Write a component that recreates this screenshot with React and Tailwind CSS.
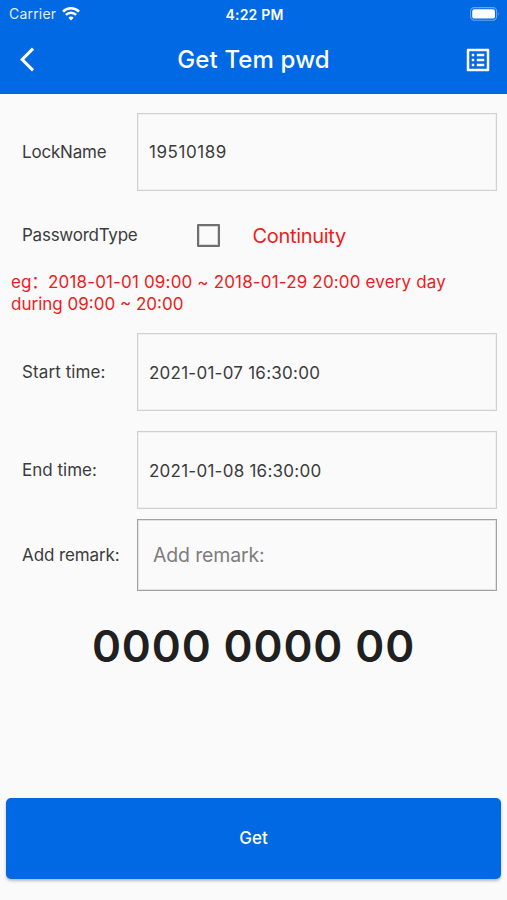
import { useState } from 'react';
import { MdArrowBackIos, MdListAlt } from 'react-icons/md';

const FIELD = 'ml-auto w-[360px] h-[78px] border border-[#d0d0d0] shadow-[inset_0_0_0_1px_#f0f0f0] flex items-center px-[11px]';

const StatusBar = () => (
  <div className="h-[27px] pl-[9px] pr-[7px] flex items-center text-[#e3efff]">
    <div className="flex-1 flex items-center gap-[6px]">
      <span className="text-[14px] tracking-[0.2px]">Carrier</span>
      <svg width="18" height="14" viewBox="0 0 18 14" fill="none" stroke="white" strokeWidth="2.6">
        <path d="M1 4.6 A11.4 11.4 0 0 1 17 4.6" />
        <path d="M3.9 7.9 A7.2 7.2 0 0 1 14.1 7.9" />
        <path d="M9 13.4 L6.4 10.7 A4 4 0 0 1 11.6 10.7 Z" fill="white" stroke="none" />
      </svg>
    </div>
    <span className="pt-px text-[14px] font-semibold tracking-[0.2px] text-white">4:22 PM</span>
    <div className="flex-1 flex justify-end">
      <svg width="30" height="14" viewBox="0 0 30 14">
        <rect x="0.6" y="0.6" width="26" height="12.6" rx="3.6" fill="none" stroke="#6ca6f0" strokeWidth="1.1" />
        <rect x="2.2" y="2.2" width="22.8" height="9.4" rx="2.2" fill="white" />
        <path d="M28 5 Q29.6 6.9 28 8.8 Z" fill="#6ca6f0" />
      </svg>
    </div>
  </div>
);

const Row = ({ label, className, children }) => (
  <div className={`flex items-center pl-[22px] pr-[10px] ${className}`}>
    <span className="pt-[2px] text-[17px] whitespace-nowrap">{label}</span>
    {children}
  </div>
);

const App = () => {
  const [continuity, setContinuity] = useState(false);
  const [remark, setRemark] = useState('');

  return (
    <div className="w-full h-[900px] bg-[#fafafa] text-[#3c3c3c] font-['Inter','Noto_Sans_CJK_SC',sans-serif] flex flex-col overflow-hidden">
      {/* Header */}
      <header className="h-[94px] shrink-0 bg-[#0069e3] text-white">
        <StatusBar />
        <div className="h-[65px] pl-[20px] pr-[14px] flex items-center justify-between">
          <MdArrowBackIos size={29} />
          <h1 className="pt-px text-[24px] font-medium tracking-[0.15px] mr-[5px]">Get Tem pwd</h1>
          <MdListAlt size={30} />
        </div>
      </header>

      {/* Form */}
      <Row label="LockName" className="mt-[19px] tracking-[-0.2px]">
        <div className={`${FIELD} pt-[2px]`}>
          <span className="text-[17px] tracking-[0.55px]">19510189</span>
        </div>
      </Row>

      <Row label="PasswordType" className="mt-[22px] h-[44px] tracking-[-0.25px]">
        <button
          aria-label="Continuity"
          onClick={() => setContinuity(!continuity)}
          className={`ml-[60px] w-[23px] h-[23px] border-2 border-[#6e6e6e] rounded-[1px] shadow-[inset_0_0_0_1px_#d8d8d8] ${continuity ? 'bg-[#0069e3]' : ''}`}
        />
        <span className="ml-[32px] pt-px text-[20px] tracking-[-0.3px] text-[#ee1c1c]">Continuity</span>
      </Row>

      <p lang="zh-CN" className="mt-[14px] ml-[11px] text-[17px] leading-[22px] text-[#ee1c1c] whitespace-nowrap">
        <span className="inline-block w-[37px]">eg：</span>
        <span className="tracking-[0.16px]">2018-01-01 09:00 ~ 2018-01-29 20:00 every day</span>
        <br />
        during 09:00 ~ 20:00
      </p>

      <Row label="Start time:" className="mt-[18px] tracking-[0.1px]">
        <div className={`${FIELD} pt-[4px]`}>
          <span className="text-[17px] tracking-[0.25px]">2021-01-07 16:30:00</span>
        </div>
      </Row>

      <Row label="End time:" className="mt-[20px]">
        <div className={`${FIELD} pt-[4px]`}>
          <span className="text-[17px] tracking-[0.25px]">2021-01-08 16:30:00</span>
        </div>
      </Row>

      <Row label="Add remark:" className="mt-[10px] tracking-[-0.1px]">
        <input
          value={remark}
          onChange={(e) => setRemark(e.target.value)}
          placeholder="Add remark:"
          className="ml-auto w-[360px] h-[72px] border border-[#a2a2a2] shadow-[inset_0_0_0_1px_#e2e2e2] px-[15px] text-[19.5px] tracking-[-0.15px] placeholder:text-[#7d7d7d] outline-none"
        />
      </Row>

      {/* Generated password */}
      <div className="mt-[25px] text-center text-[44px] leading-[60px] font-semibold text-[#202020] tracking-[0.9px]">
        0000 0000 00
      </div>

      <button className="mt-auto mb-[21px] mx-[6px] h-[81px] shrink-0 rounded-[5px] bg-[#0069e3] text-white text-[17px] font-medium shadow-[0_2px_3px_rgba(0,0,0,0.25)]">
        Get
      </button>
    </div>
  );
};

export default App;
